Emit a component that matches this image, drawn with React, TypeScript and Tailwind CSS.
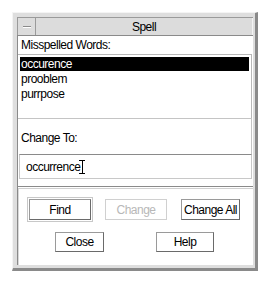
export default function App() {
  return (
    <div className="min-h-[283px] w-[269px] bg-white p-3 font-['Liberation_Sans',Arial,sans-serif] text-[12px] leading-none tracking-[-0.5px] text-black">
      <div className="flex h-[259px] w-[246px] flex-col border-b-[3px] border-l border-r-[3px] border-t border-b-[#8a8a8a] border-l-[#f4f4f4] border-r-[#8a8a8a] border-t-[#f4f4f4] bg-[#dedede] pb-[3px] pl-1 pr-[2px] pt-1">
        {/* title bar */}
        <div className="flex h-[18px] border-l border-t border-[#9a9a9a]">
          <div className="flex w-[18px] items-center justify-center border-r border-[#9a9a9a] bg-[#dcdcdc]">
            <div className="h-[2px] w-[8px] border-b border-t border-b-white border-t-[#8a8a8a]" />
          </div>
          <div className="flex flex-1 items-center justify-center border-r border-[#f4f4f4] bg-[#dcdcdc]">
            Spell
          </div>
        </div>
        {/* content */}
        <div className="flex flex-1 flex-col border-l border-t border-[#8a8a8a] bg-white">
          <div className="flex h-[18px] items-center pl-[3px]">Misspelled Words:</div>
          <div className="mr-[1px] flex h-[64px] flex-col border-r border-t border-[#b8b8b8] pl-[2px] pr-[2px] pt-[2px]">
            <div className="flex h-[14px] items-center bg-black pl-[1px] text-white">occurence</div>
            <div className="flex h-[15px] items-center pl-[1px]">prooblem</div>
            <div className="flex h-[15px] items-center pl-[1px]">purrpose</div>
          </div>
          <div className="mr-[1px] flex h-[36px] items-center border-r border-t border-[#c4c4c4] pl-[3px] pt-[3px]">
            Change To:
          </div>
          <div className="mx-[1px] flex h-[25px] items-center border-b border-l border-r border-t border-b-[#c8c8c8] border-l-[#c8c8c8] border-r-[#c8c8c8] border-t-[#8a8a8a] pl-[6px]">
            occurrence
            <svg width="7" height="14" viewBox="0 0 7 14" className="-ml-[1px]" fill="none" stroke="black" strokeWidth="1">
              <path d="M0 0.5 H6 M3.5 0.5 V13.5 M0 13.5 H6" />
            </svg>
          </div>
          <div className="mt-[7px] h-[3px] border-b border-t border-b-[#d0d0d0] border-t-[#8a8a8a]" />
          <div className="flex flex-1 flex-col border-l border-[#d8d8d8]">
            <div className="mt-[8px] flex items-center pl-[8px]">
              <div className="border border-[#c8c8c8] p-[1px]">
                <div className="flex h-[21px] w-[62px] items-center justify-center border border-b-[#6a6a6a] border-l-[#9a9a9a] border-r-[#6a6a6a] border-t-[#9a9a9a]">
                  Find
                </div>
              </div>
              <div className="ml-[12px] flex h-[21px] w-[62px] items-center justify-center border border-[#d0d0d0] text-[#b8b8b8]">
                Change
              </div>
              <div className="ml-[14px] flex h-[21px] w-[59px] items-center justify-center whitespace-nowrap border border-b-[#6a6a6a] border-l-[#9a9a9a] border-r-[#6a6a6a] border-t-[#9a9a9a]">
                Change All
              </div>
            </div>
            <div className="mt-[10px] flex items-center pl-[36px]">
              <div className="flex h-[20px] w-[49px] items-center justify-center border border-b-[#6a6a6a] border-l-[#9a9a9a] border-r-[#6a6a6a] border-t-[#9a9a9a]">
                Close
              </div>
              <div className="ml-[52px] flex h-[20px] w-[58px] items-center justify-center border border-b-[#6a6a6a] border-l-[#9a9a9a] border-r-[#6a6a6a] border-t-[#9a9a9a]">
                Help
              </div>
            </div>
          </div>
        </div>
      </div>
    </div>
  );
}
